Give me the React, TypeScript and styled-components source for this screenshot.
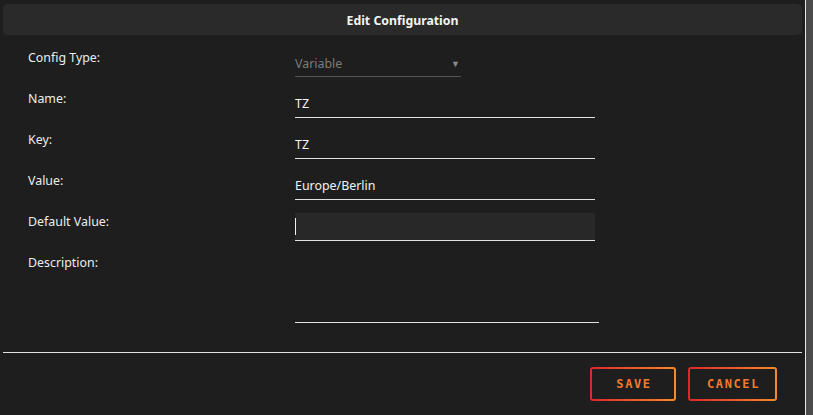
import React from "react";
import styled, { createGlobalStyle } from "styled-components";

const Global = createGlobalStyle`
  html, body { margin: 0; padding: 0; }
  body {
    background: #4b4b4b;
    font-family: "Noto Sans", "Liberation Sans", sans-serif;
    overflow: hidden;
  }
`;

const Dialog = styled.div`
  width: 806px;
  height: 415px;
  box-sizing: border-box;
  background: #1e1e1e;
  border-right: 1px solid #e6e6e6;
  padding: 4px 3px 0 3px;
  display: flex;
  flex-direction: column;
`;

const Header = styled.div`
  height: 31px;
  box-sizing: border-box;
  padding-top: 1px;
  background: #2a2a2a;
  border-radius: 5px;
  display: flex;
  align-items: center;
  justify-content: center;
  color: #f4f4f4;
  font-weight: 700;
  font-size: 12.3px;
`;

const Form = styled.div`
  display: flex;
  flex-direction: column;
  gap: 13px;
  padding: 14px 0 0 25px;
`;

const Row = styled.div`
  display: grid;
  grid-template-columns: 267px auto;
  align-items: start;
`;

const Label = styled.div`
  color: #ececec;
  font-size: 12.4px;
  line-height: 16px;
  margin-top: 1px;
`;

const Field = styled.div<{ $width: number; $filled?: boolean; $muted?: boolean }>`
  width: ${(p) => p.$width}px;
  box-sizing: content-box;
  border-bottom: 1px solid ${(p) => (p.$muted ? "#555" : "#e2e2e2")};
  background: ${(p) => (p.$filled ? "#282828" : "transparent")};
  display: flex;
  align-items: center;
  justify-content: space-between;
  color: ${(p) => (p.$muted ? "#7c7c7c" : "#f4f4f4")};
  font-size: 12.4px;
  padding-top: ${(p) => (p.$muted ? "1px" : "0")};
  height: ${(p) => (p.$muted ? "26px" : "27px")};
`;

const TextArea = styled.div`
  width: 304px;
  height: 68px;
  border-bottom: 1px solid #e2e2e2;
`;

const Caret = styled.span`
  display: block;
  width: 1px;
  height: 17px;
  background: #f0f0f0;
`;

const Arrow = styled.span`
  font-size: 9px;
  color: #8a8a8a;
  margin-right: 1px;
`;

const Divider = styled.hr`
  margin: 29px 0 0 0;
  border: none;
  border-top: 1px solid #e2e2e2;
  height: 0;
`;

const Footer = styled.div`
  display: flex;
  justify-content: flex-end;
  gap: 12px;
  padding: 14px 25px 0 0;
`;

const Button = styled.button<{ $width: number }>`
  width: ${(p) => p.$width}px;
  height: 34px;
  border: 2px solid transparent;
  border-radius: 3px;
  background:
    linear-gradient(#1e1e1e, #1e1e1e) padding-box,
    linear-gradient(90deg, #e0262b, #f98a2b) border-box;
  font-family: "DejaVu Sans Mono", "Liberation Mono", monospace;
  font-weight: 700;
  font-size: 12px;
  letter-spacing: 1.6px;
  padding: 0 0 0 2px;
  color: #f27a2b;
  cursor: pointer;
`;

export default function App() {
  return (
    <>
      <Global />
      <Dialog>
        <Header>Edit Configuration</Header>
        <Form>
          <Row>
            <Label>Config Type:</Label>
            <Field $width={166} $muted>
              <span>Variable</span>
              <Arrow>▼</Arrow>
            </Field>
          </Row>
          <Row>
            <Label>Name:</Label>
            <Field $width={300}>TZ</Field>
          </Row>
          <Row>
            <Label>Key:</Label>
            <Field $width={300}>TZ</Field>
          </Row>
          <Row>
            <Label>Value:</Label>
            <Field $width={300}>Europe/Berlin</Field>
          </Row>
          <Row>
            <Label>Default Value:</Label>
            <Field $width={300} $filled>
              <Caret />
            </Field>
          </Row>
          <Row>
            <Label>Description:</Label>
            <TextArea />
          </Row>
        </Form>
        <Divider />
        <Footer>
          <Button $width={86}>SAVE</Button>
          <Button $width={89}>CANCEL</Button>
        </Footer>
      </Dialog>
    </>
  );
}
